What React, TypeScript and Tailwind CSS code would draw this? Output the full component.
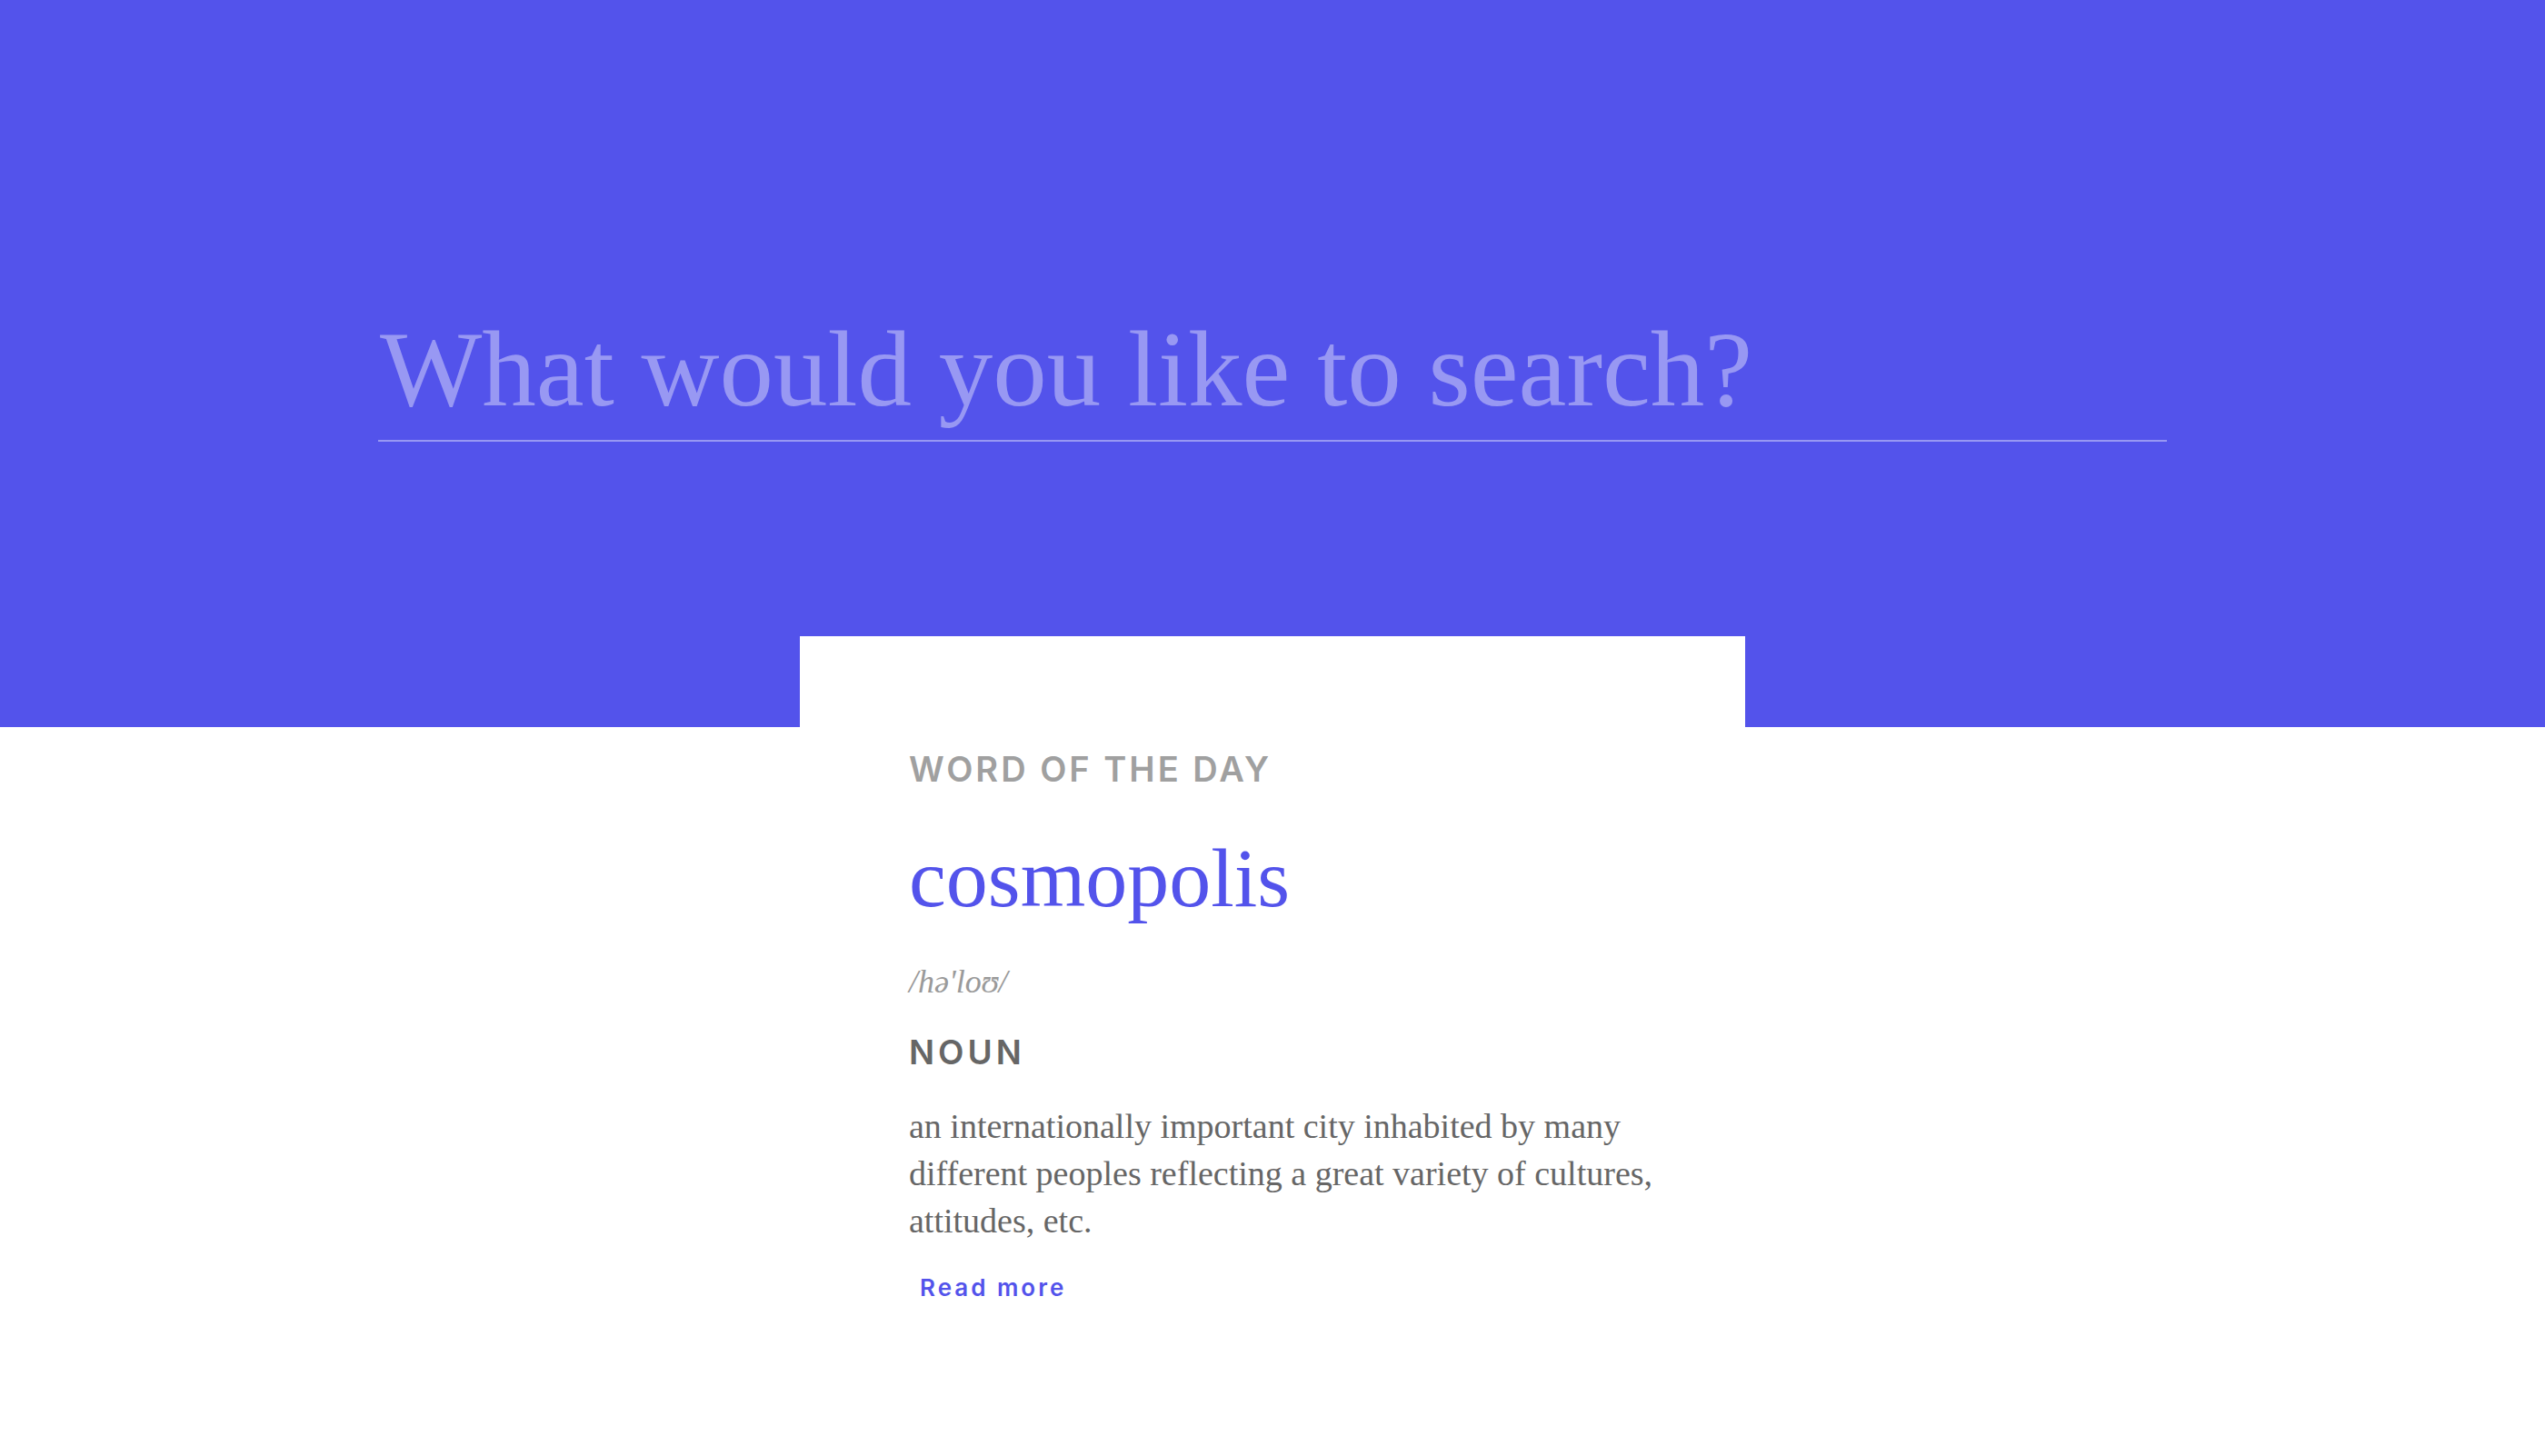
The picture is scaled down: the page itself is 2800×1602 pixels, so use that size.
import React from 'react';

const serif = "font-['Liberation_Serif','Times_New_Roman',serif]";
const sans = "font-['Inter','Liberation_Sans',sans-serif]";

export default function App() {
  return (
    <div className="min-h-[1602px] w-full bg-white">
      {/* Search band */}
      <header className="h-[800px] bg-[#5353eb] pt-[328px]">
        <div className="mx-auto w-[1968px]">
          <input
            type="text"
            placeholder="What would you like to search?"
            className={`${serif} h-[158px] w-full border-0 border-b-2 border-[#9898f3] bg-transparent pl-[2px] text-[119px] text-white outline-none placeholder:text-[#9898f3]`}
          />
        </div>
      </header>

      {/* Word of the day card */}
      <main className="relative z-10 mx-auto -mt-[100px] w-[1040px] bg-white pb-[120px] pl-[120px] pr-[80px] pt-[123px]">
        <h2 className={`${sans} text-[38px] font-semibold uppercase leading-[46px] tracking-[3px] text-[#a0a0a0]`}>
          Word of the day
        </h2>
        <h1 className={`${serif} mt-[47px] text-[92px] leading-[100px] text-[#5353eb]`}>cosmopolis</h1>
        <p className={`${serif} mt-[44px] text-[36px] italic leading-[40px] text-[#9a9a9a]`}>/hə'loʊ/</p>
        <h3 className={`${sans} mt-[36px] text-[37px] font-semibold uppercase leading-[44px] tracking-[4px] text-[#666666]`}>
          Noun
        </h3>
        <p className={`${serif} mt-[33px] text-[38px] leading-[52px] text-[#666666]`}>
          an internationally important city inhabited by many different peoples reflecting a great variety of cultures,
          attitudes, etc.
        </p>
        <a href="#" className={`${sans} ml-[12px] mt-[32px] block text-[26px] font-semibold leading-[32px] tracking-[3px] text-[#5353eb]`}>
          Read more
        </a>
      </main>
    </div>
  );
}
